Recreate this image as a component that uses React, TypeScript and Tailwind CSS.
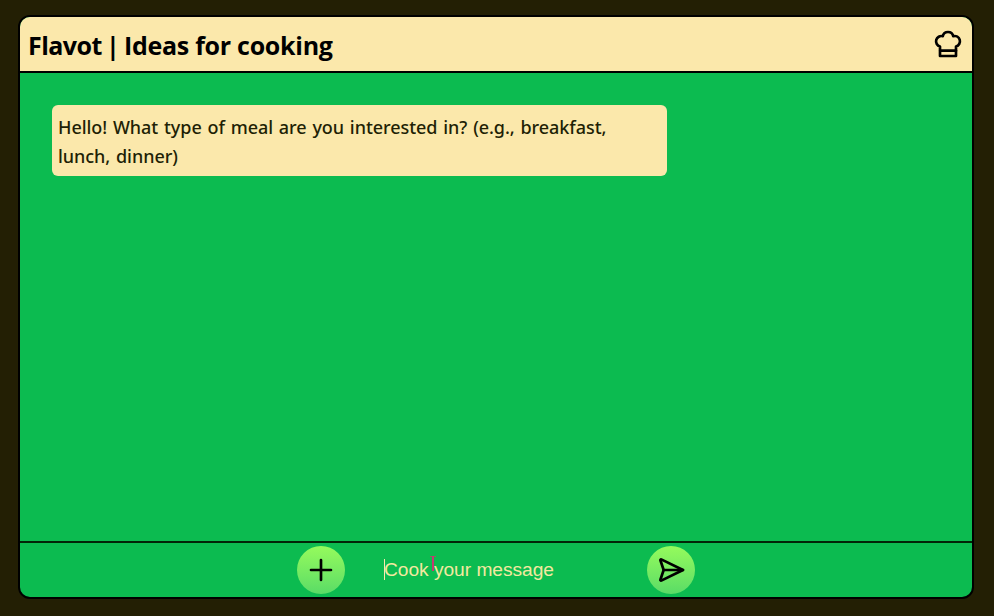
import React from "react";

function ChefHat() {
  return (
    <svg width="32" height="32" viewBox="0 0 24 24" fill="none" stroke="#000" strokeWidth="2" strokeLinecap="round" strokeLinejoin="round">
      <path d="M12 3c1.918 0 3.52 1.35 3.91 3.151a4 4 0 0 1 2.09 7.723v7.126h-12v-7.126a4 4 0 1 1 2.092 -7.723a4 4 0 0 1 3.908 -3.151z" />
      <path d="M6.161 17.009l11.839 -.009" />
    </svg>
  );
}

function Header() {
  return (
    <header className="flex h-[56px] shrink-0 items-center justify-between border-b-2 border-black bg-[#fbe8ab] px-2">
      <h1 className="mt-0.5 flex whitespace-nowrap font-['Open_Sans','Noto_Sans',sans-serif] text-[25px] font-bold leading-8 tracking-[-0.28px] text-black">
        <span className="w-[78px] tracking-[-0.55px]">Flavot</span>
        <span className="w-[18px]">|</span>
        <span>Ideas for cooking</span>
      </h1>
      <ChefHat />
    </header>
  );
}

function Message() {
  return (
    <div className="h-[71px] w-[615px] whitespace-nowrap rounded-md bg-[#fbe8ab] pl-1.5 pt-2 font-['Noto_Sans',sans-serif] text-[18px] font-medium leading-[29px] tracking-[-0.05px] [word-spacing:1.2px] text-[#211f05]">
      <p>Hello! What type of meal are you interested in? (e.g., breakfast,</p>
      <p>lunch, dinner)</p>
    </div>
  );
}

function Composer() {
  return (
    <footer className="flex h-[56px] shrink-0 items-center border-t-2 border-[#022507] pl-[277px]">
      <button className="flex size-12 items-center justify-center rounded-full bg-linear-to-b from-[#95fb5c] to-[#59dc66]" aria-label="New">
        <svg width="32" height="32" viewBox="0 0 24 24" fill="none" stroke="#000" strokeWidth="2" strokeLinecap="round">
          <path d="M12 4.5v15M4.5 12h15" />
        </svg>
      </button>
      <div className="relative ml-[39px] flex h-12 w-[263px] items-center font-['Liberation_Sans',Arial,sans-serif] text-[19.2px] text-[#f3e9a0]">
        <span className="whitespace-nowrap tracking-[-0.04px]">Cook your message</span>
        <span className="absolute left-0 top-[13px] h-[21px] w-px bg-[#fbe8ab]" />
        <svg className="absolute left-[46px] top-[10px]" width="6" height="16" fill="none" stroke="#c43a70">
          <path d="M0 .5H6" opacity=".7" />
          <path d="M3 0V15" strokeWidth="2" />
        </svg>
      </div>
      <button className="flex size-12 items-center justify-center rounded-full bg-linear-to-b from-[#95fb5c] to-[#59dc66]" aria-label="Send">
        <svg width="32" height="32" viewBox="0 0 24 24" fill="none" stroke="#000" strokeWidth="2" strokeLinecap="round" strokeLinejoin="round">
          <path d="M4.698 4.034l16.302 7.966l-16.302 7.966a.503 .503 0 0 1 -.546 -.124a.555 .555 0 0 1 -.12 -.568l2.468 -7.274l-2.468 -7.274a.555 .555 0 0 1 .12 -.568a.503 .503 0 0 1 .546 -.124z" />
          <path d="M6.5 12h14.5" />
        </svg>
      </button>
    </footer>
  );
}

export default function App() {
  return (
    <div className="h-[616px] w-[994px] overflow-hidden bg-[#231f04] pl-[18px] pt-[15px]">
      <main className="flex h-[584px] w-[956px] flex-col overflow-hidden rounded-xl border-2 border-black bg-[#0cbb50]">
        <Header />
        <section className="flex-1 px-8 pt-8">
          <Message />
        </section>
        <Composer />
      </main>
    </div>
  );
}
